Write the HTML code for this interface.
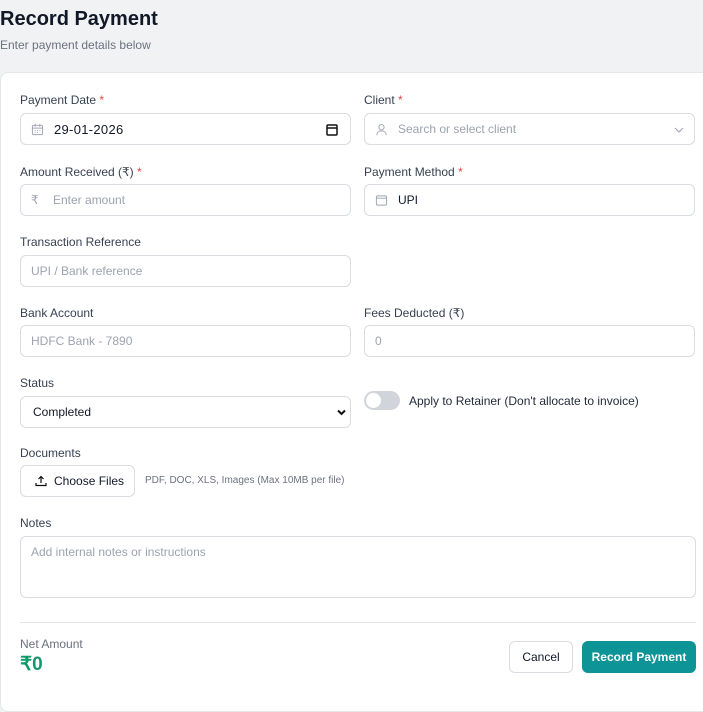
<!DOCTYPE html>
<html><head><meta charset="utf-8"><style>
*{box-sizing:border-box;margin:0;padding:0}
body{width:703px;height:676px;overflow:hidden;background:#f1f2f4;font-family:"Liberation Sans",sans-serif;color:#1f2937;position:relative}
.a{position:absolute}
h1{position:absolute;left:0;top:8px;font-size:20px;font-weight:bold;color:#111827}
.sub{left:0;top:38px;font-size:12px;color:#6b7280}
.card{left:0;top:72px;width:720px;height:640px;background:#fff;border-radius:8px;border:1px solid #e5e7eb}
.lbl{font-size:12px;color:#374151}
.lbl b{color:#ef4444;font-weight:normal}
.in{height:32px;border:1px solid #d9dce1;border-radius:6px;background:#fff;font-size:12px;color:#9ca3af;display:flex;align-items:center;padding-left:10px}
.in.v{color:#111827}
.ic{width:13px;height:13px;margin-right:10px;color:#9ca3af}
</style></head><body>
<h1>Record Payment</h1>
<div class="a sub">Enter payment details below</div>
<div class="a card"></div>

<div class="a lbl" style="left:20px;top:93px">Payment Date <b>*</b></div>
<div class="a in v" style="left:20px;top:113px;width:331px"><svg class="ic" viewBox="0 0 14 14" fill="none" stroke="#9ca3af"><rect x="1.5" y="2.5" width="11" height="10" rx="1"/><path d="M1.5 5.5h11M4.5 1v3M9.5 1v3M4 8h1M6.5 8h1M9 8h1M4 10h1M6.5 10h1"/></svg><span style="font-size:13px;letter-spacing:.3px">29-01-2026</span>
<svg class="a" style="right:12px;top:9px" width="12" height="13" viewBox="0 0 12 13" fill="none" stroke="#111" stroke-width="1.5"><rect x="1" y="2" width="10" height="10" rx="1"/><path d="M1 5h10"/></svg></div>

<div class="a lbl" style="left:364px;top:93px">Client <b>*</b></div>
<div class="a in" style="left:364px;top:113px;width:331px"><svg class="ic" viewBox="0 0 14 14" fill="none" stroke="#9ca3af"><circle cx="7" cy="4.5" r="2.8"/><path d="M2 13c0-3 2.2-4.5 5-4.5s5 1.5 5 4.5"/></svg>Search or select client
<svg class="a" style="right:10px;top:12px" width="10" height="8" viewBox="0 0 10 8" fill="none" stroke="#9ca3af"><path d="M1 2l4 4 4-4"/></svg></div>

<div class="a lbl" style="left:20px;top:165px">Amount Received (₹) <b>*</b></div>
<div class="a in" style="left:20px;top:184px;width:331px"><span style="width:13px;margin-right:9px;color:#9ca3af">₹</span>Enter amount</div>

<div class="a lbl" style="left:364px;top:165px">Payment Method <b>*</b></div>
<div class="a in v" style="left:364px;top:184px;width:331px"><svg class="ic" viewBox="0 0 14 14" fill="none" stroke="#9ca3af"><rect x="1.5" y="2" width="11" height="10" rx="1.5"/><path d="M1.5 4.5h11"/></svg>UPI</div>

<div class="a lbl" style="left:20px;top:235px">Transaction Reference</div>
<div class="a in" style="left:20px;top:255px;width:331px">UPI / Bank reference</div>

<div class="a lbl" style="left:20px;top:306px">Bank Account</div>
<div class="a in" style="left:20px;top:325px;width:331px">HDFC Bank - 7890</div>
<div class="a lbl" style="left:364px;top:306px">Fees Deducted (₹)</div>
<div class="a in" style="left:364px;top:325px;width:331px">0</div>

<div class="a lbl" style="left:20px;top:376px">Status</div>
<div class="a in v" style="left:20px;top:396px;width:331px;padding-left:12px">Completed
<svg class="a" style="right:4px;top:12px" width="9" height="7" viewBox="0 0 9 7" fill="none" stroke="#111" stroke-width="2"><path d="M1 1.5l3.5 3.5 3.5-3.5"/></svg></div>
<div class="a" style="left:364px;top:391px;width:36px;height:19px;border-radius:10px;background:#d1d5db"><div class="a" style="left:2px;top:2px;width:15px;height:15px;border-radius:50%;background:#fff"></div></div>
<div class="a lbl" style="left:409px;top:394px;color:#1f2937">Apply to Retainer (Don't allocate to invoice)</div>

<div class="a lbl" style="left:20px;top:446px">Documents</div>
<div class="a in v" style="left:20px;top:465px;width:115px;padding-left:14px"><svg width="12" height="12" viewBox="0 0 12 12" fill="none" stroke="#111" stroke-width="1.2" style="margin-right:7px"><path d="M6 8V1.5M3.5 4L6 1.5 8.5 4M1 8v2.5h10V8"/></svg>Choose Files</div>
<div class="a" style="left:145px;top:475px;font-size:10px;color:#6b7280">PDF, DOC, XLS, Images (Max 10MB per file)</div>

<div class="a lbl" style="left:20px;top:516px">Notes</div>
<div class="a in" style="left:20px;top:536px;width:676px;height:62px;align-items:flex-start;padding-top:8px">Add internal notes or instructions</div>

<div class="a" style="left:20px;top:622px;width:676px;height:1px;background:#e5e7eb"></div>
<div class="a" style="left:20px;top:637px;font-size:12px;color:#6b7280">Net Amount</div>
<div class="a" style="left:20px;top:653px;font-size:19px;font-weight:bold;color:#0f9a6a">₹0</div>
<div class="a in v" style="left:509px;top:641px;width:64px;justify-content:center;padding:0">Cancel</div>
<div class="a" style="left:582px;top:641px;width:114px;height:32px;border-radius:6px;background:#0d9497;color:#fff;font-size:12px;font-weight:bold;display:flex;align-items:center;justify-content:center">Record Payment</div>
</body></html>
